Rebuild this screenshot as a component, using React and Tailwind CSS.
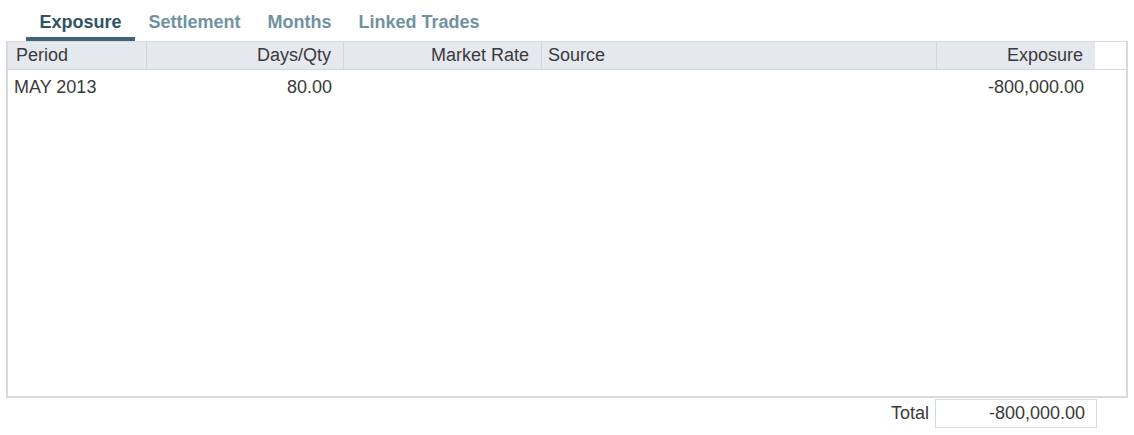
import React, { useState } from "react";

const tabs = ["Exposure", "Settlement", "Months", "Linked Trades"];

const columns = [
  { key: "period", label: "Period", w: "w-[139px]", align: "text-left" },
  { key: "qty", label: "Days/Qty", w: "w-[197px]", align: "text-right" },
  { key: "rate", label: "Market Rate", w: "w-[198px]", align: "text-right" },
  { key: "source", label: "Source", w: "w-[395px]", align: "text-left" },
  { key: "exposure", label: "Exposure", w: "w-[158px]", align: "text-right", last: true },
];

const rows = [
  { period: "MAY 2013", qty: "80.00", rate: "", source: "", exposure: "-800,000.00" },
];

export default function App() {
  const [active, setActive] = useState("Exposure");

  return (
    <div className="w-[1134px] h-[435px] bg-white text-[18px] text-[#3a3a3a]" style={{ fontFamily: '"Liberation Sans", Arial, sans-serif' }}>
      {/* Tabs */}
      <div className="flex pl-[26px] h-[41px]">
        {tabs.map((t) => (
          <button
            key={t}
            onClick={() => setActive(t)}
            className={`px-[13.5px] pt-[7px] h-full font-bold leading-[24px] border-b-4 ${
              active === t ? "text-[#2f5466] border-[#3d6579]" : "text-[#6f92a3] border-transparent"
            }`}
          >
            {t}
          </button>
        ))}
      </div>

      {/* Grid */}
      <div className="mx-[6px] h-[357px] border-2 border-t border-[#d9d9d9]">
        <div className="flex h-[28px] border-b border-[#d3d6dc]">
          {columns.map((c, i) => (
            <div
              key={c.key}
              className={`${c.w} ${c.align} bg-[#e6e8ef] leading-[27px] ${
                c.align === "text-right" ? "pr-[12px]" : i === 0 ? "pl-[8px]" : "pl-[6px]"
              } ${c.last ? "" : "border-r border-[#d3d6dc]"}`}
            >
              {c.label}
            </div>
          ))}
        </div>
        {rows.map((r, idx) => (
          <div key={idx} className="flex h-[35px] items-center">
            {columns.map((c, i) => (
              <div
                key={c.key}
                className={`${c.w} ${c.align} ${c.align === "text-right" ? "pr-[11px]" : "pl-[6px]"} ${c.last ? "" : "border-r border-transparent"}`}
              >
                {r[c.key]}
              </div>
            ))}
          </div>
        ))}
      </div>

      {/* Total */}
      <div className="flex justify-end items-center pr-[37px] pt-px">
        <span className="mr-[6px]">Total</span>
        <div className="w-[162px] h-[29px] border border-[#d9d9d9] text-right pr-[11px] leading-[27px]">
          -800,000.00
        </div>
      </div>
    </div>
  );
}
